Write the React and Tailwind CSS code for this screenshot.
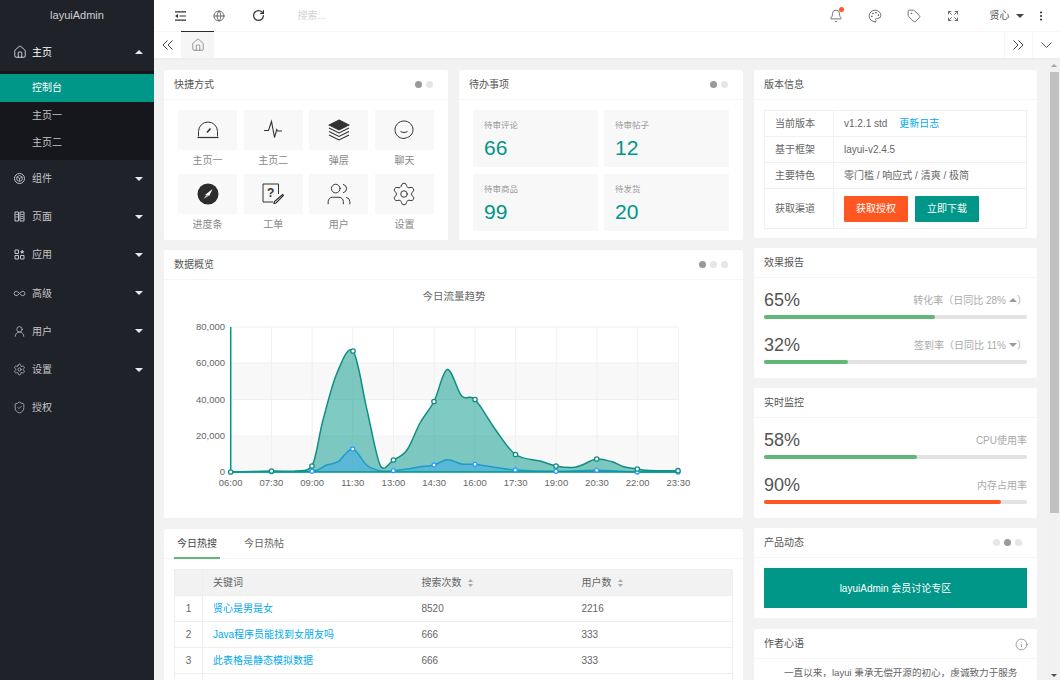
import React from 'react';
import {
  House, Infinity as InfinityIcon, UserRound, Settings, ShieldCheck, Globe, RotateCw,
  Bell, Palette, Tag, Expand, EllipsisVertical, Info, Users,
} from 'lucide-react';

// layui's cube and template glyphs are not in lucide, drawn to the same box
const CubeGlyph = ({ size }) => (
  <svg width={size} height={size} viewBox="0 0 13 13" fill="none" stroke="currentColor" strokeWidth="1">
    <circle cx="6.5" cy="6.5" r="5" />
    <path d="M6.500 3.500l2.700 1.500v3L6.500 9.500 3.800 8V5zM3.800 5l2.700 1.500L9.200 5M6.500 6.500v3" strokeWidth="0.8" />
  </svg>
);
const TemplateGlyph = ({ size }) => (
  <svg width={size} height={size} viewBox="0 0 13 13" fill="none" stroke="currentColor" strokeWidth="1">
    <path d="M2 2h3.500v9H2zM7 2h4v9H7z" />
    <path d="M7.500 4.500h3M7.500 6.500h3M7.500 8.500h3M2.500 4.500h2.500M2.500 7h2.500" strokeWidth="0.8" />
  </svg>
);
const AppsGlyph = ({ size }) => (
  <svg width={size} height={size} viewBox="0 0 13 13" fill="none" stroke="currentColor" strokeWidth="1">
    <path d="M2 2h3.500v3.500H2zM2 7.500h3.500V11H2zM7.500 7.500H11V11H7.500z" />
    <path d="M9.200 1.500l.7 1.500 1.500.2-1.100 1 .3 1.500-1.400-.7-1.400.7.300-1.500-1.100-1 1.500-.2z" fill="currentColor" stroke="none" />
  </svg>
);

const navItems = [
  { label: '组件', icon: CubeGlyph },
  { label: '页面', icon: TemplateGlyph },
  { label: '应用', icon: AppsGlyph },
  { label: '高级', icon: InfinityIcon },
  { label: '用户', icon: UserRound },
  { label: '设置', icon: Settings },
  { label: '授权', icon: ShieldCheck, noCaret: true },
];

const CaretUp = () => <span className="w-0 h-0 border-x-4 border-x-transparent border-b-4 border-b-white/90" />;
const CaretDown = ({ className = 'border-t-white/90' }) => <span className={`w-0 h-0 border-x-4 border-x-transparent border-t-4 ${className}`} />;

const Sidebar = () => (
  <aside className="w-[154px] shrink-0 bg-[#20222a] text-[#c4c4c6] text-[10px]">
    <div className="h-[33px] pb-[2px] flex items-center justify-center text-[11px] text-[#d0d0d2]">layuiAdmin</div>
    <div className="h-[38px] flex items-center pl-[13px] pr-[11px] text-white">
      <House size={14} strokeWidth={1.3} />
      <span className="ml-[5px] flex-1">主页</span>
      <CaretUp />
    </div>
    <div className="bg-[#16171d] py-[3px]">
      <div className="h-[27.5px] flex items-center pl-[32px] bg-[#009688] text-white">控制台</div>
      <div className="h-[27.5px] flex items-center pl-[32px]">主页一</div>
      <div className="h-[27.5px] flex items-center pl-[32px]">主页二</div>
    </div>
    {navItems.map(({ label, icon: Icon, noCaret }) => (
      <div key={label} className="h-[38.2px] flex items-center pl-[13px] pr-[11px]">
        <Icon size={13} strokeWidth={1.4} />
        <span className="ml-[6px] flex-1">{label}</span>
        {!noCaret && <CaretDown />}
      </div>
    ))}
  </aside>
);

const TopBar = () => (
  <div className="h-[32px] bg-white border-b border-[#f6f6f6] flex items-center pl-[6.500px] pr-[9px] text-[#333] text-[10px]">
    <div className="w-[39px] flex justify-center">
      <svg width="11" height="10" viewBox="0 0 11 10" fill="none" stroke="#333" strokeWidth="1.2">
        <path d="M0 .8h11M4.500 5h6.500M0 9.200h11" />
        <path d="M3 3v4L0 5z" fill="#333" stroke="none" />
      </svg>
    </div>
    <div className="w-[39px] flex justify-center"><Globe size={12} strokeWidth={1.7} className="text-[#555]" /></div>
    <div className="w-[39px] flex justify-center"><RotateCw size={13} strokeWidth={2.3} /></div>
    <span className="ml-[20px] text-[#d2d2d2] flex-1">搜索...</span>
    <div className="w-[39px] flex justify-center relative">
      <Bell size={14} strokeWidth={1.4} className="text-[#555]" />
      <span className="absolute left-[23px] -top-[2px] w-[5px] h-[5px] rounded-full bg-[#ff5722]" />
    </div>
    <div className="w-[39px] flex justify-center"><Palette size={14} strokeWidth={1.4} className="text-[#555]" /></div>
    <div className="w-[39px] flex justify-center"><Tag size={14} strokeWidth={1.4} className="text-[#555]" /></div>
    <div className="w-[39px] flex justify-center"><Expand size={12} strokeWidth={1.6} className="text-[#555]" /></div>
    <div className="w-[59px] flex items-center justify-center gap-[6px] text-[#555] pl-[10px]">
      <span>贤心</span>
      <CaretDown className="border-t-[#444]" />
    </div>
    <div className="w-[20px] flex justify-center pr-[1px]"><EllipsisVertical size={12} strokeWidth={2.2} /></div>
  </div>
);

const Chevrons = ({ flip }) => (
  <svg width="11" height="10" viewBox="0 0 11 10" fill="none" stroke="#444" strokeWidth="1" className={flip ? 'rotate-180' : ''}>
    <path d="M5.500 .5L1 5l4.500 4.500M10.500 .5L6 5l4.500 4.500" />
  </svg>
);

const TabBar = () => (
  <div className="h-[28px] bg-white flex items-stretch border-b-2 border-[#ededed] text-[#555]">
    <div className="w-[27px] flex items-center justify-center"><Chevrons /></div>
    <div className="w-[33px] -mt-[1px] border-t border-[#292b34] bg-[#f6f6f6] flex items-center justify-center">
      <House size={14} strokeWidth={1} />
    </div>
    <div className="flex-1" />
    <div className="w-[28px] border-l border-[#f6f6f6] flex items-center justify-center"><Chevrons flip /></div>
    <div className="w-[28px] border-l border-[#f6f6f6] flex items-center justify-center">
      <svg width="11" height="6" viewBox="0 0 11 6" fill="none" stroke="#555" strokeWidth="1"><path d="M.5 .5l5 5 5-5" /></svg>
    </div>
  </div>
);

const Dots = ({ count, active = 0 }) => (
  <div className="flex gap-[4px] mr-[5px]">
    {Array.from({ length: count }).map((_, i) => (
      <span key={i} className={i === active ? 'w-[7px] h-[7px] rounded-full bg-[#999]' : 'w-[7px] h-[7px] rounded-full bg-[#e6e6e6]'} />
    ))}
  </div>
);

const Card = ({ title, right, className = '', children }) => (
  <section className={`bg-white rounded-[2px] ${className}`}>
    <div className="h-[30px] px-[10px] flex items-center justify-between border-b border-[#f6f6f6] text-[10px] text-[#555]">
      <span>{title}</span>
      {right}
    </div>
    {children}
  </section>
);

// shortcut icons, all on a 22 box
const GaugeIcon = () => (
  <svg width="22" height="22" viewBox="0 0 22 22" fill="none" stroke="#333" strokeWidth="1">
    <path d="M1.500 17.500V12.500a9.500 9.500 0 0 1 19 0v5" />
    <path d="M.5 18.500h21" strokeWidth="1.200" />
    <path d="M10 13.500l3.500-4" strokeWidth="1.600" />
  </svg>
);
const PulseIcon = () => (
  <svg width="20" height="22" viewBox="0 0 20 22" fill="none" stroke="#333" strokeWidth="1.100">
    <path d="M1 11.500h4.500L8.500 2.500l3 16 2.200-8 1 1.500H19" />
  </svg>
);
const LayersIcon = () => (
  <svg width="22" height="22" viewBox="0 0 22 22" fill="none" stroke="#333" strokeWidth="1.100">
    <path d="M11 1l10 5-10 5L1 6z" fill="#333" />
    <path d="M1 9l10 5 10-5M1 12.500l10 5 10-5M1 16l10 5 10-5" />
  </svg>
);
const ChatIcon = () => (
  <svg width="20" height="22" viewBox="0 0 20 22" fill="none" stroke="#333" strokeWidth="1">
    <path d="M10 19.500c-5 0-9-3.800-9-8.700s4-8.800 9-8.800 9 3.900 9 8.800c0 4.200-3 7-6.700 8z" />
    <path d="M6.500 12.500c2 1.300 5 1.300 7 0" />
  </svg>
);
const CompassIcon = () => (
  <svg width="22" height="22" viewBox="0 0 22 22">
    <circle cx="11" cy="11" r="10.500" fill="#2c2c2c" />
    <path d="M15.500 6l-3 6.500L8 12z" fill="#fff" />
    <path d="M6.500 16l3-4.500 3 1z" fill="#bbb" />
  </svg>
);
const FormIcon = () => (
  <svg width="22" height="22" viewBox="0 0 22 22" fill="none" stroke="#333" strokeWidth="1">
    <path d="M1 1h15.500v10M11 19H1V1" />
    <path d="M20.500 11.500l1 1L14 20l-2 .5.500-2z" strokeWidth="1.200" />
    <text x="5" y="14" fontSize="12" fontWeight="700" fill="#333" stroke="none" fontFamily="Liberation Sans">?</text>
  </svg>
);

const shortcuts = [
  { label: '主页一', icon: <GaugeIcon /> },
  { label: '主页二', icon: <PulseIcon /> },
  { label: '弹层', icon: <LayersIcon /> },
  { label: '聊天', icon: <ChatIcon /> },
  { label: '进度条', icon: <CompassIcon /> },
  { label: '工单', icon: <FormIcon /> },
  { label: '用户', icon: <Users size={26} strokeWidth={0.9} className="text-[#333]" /> },
  { label: '设置', icon: <Settings size={26} strokeWidth={0.9} className="text-[#333]" /> },
];

const todos = [
  { label: '待审评论', value: 66 },
  { label: '待审帖子', value: 12 },
  { label: '待审商品', value: 99 },
  { label: '待发货', value: 20 },
];

// page coordinates read off the picture, viewBox below starts at the card's corner
const tealPts = [[230.7, 472], [271.5, 471], [296, 471], [312, 466], [323, 420], [337, 373], [353, 351], [367, 410], [380.7, 466.5], [393.5, 460], [407, 450], [420, 423], [434, 401.5], [447.3, 369.5], [461.7, 396], [475, 399.5], [495, 429], [515.5, 454.5], [540, 461], [556, 466], [573, 467.5], [582, 465], [596.7, 459], [613, 462], [623, 466.5], [637.3, 469], [650, 470.5], [678, 470.7]];
const bluePts = [[230.7, 472], [271.5, 471.7], [312, 471.3], [326.7, 465], [338, 461.7], [352.7, 449], [366.7, 465], [380.7, 471], [393.3, 470.7], [407, 469], [420, 466.7], [434, 465], [447.3, 459.7], [461.7, 464], [475, 464.3], [493, 467], [515.3, 470], [556, 471.3], [596.7, 470.3], [637.3, 472], [678, 472]];
const tealDots = [0, 1, 3, 6, 9, 12, 15, 17, 19, 22, 25, 27].map(i => tealPts[i]);
const blueDots = [1, 2, 5, 8, 11, 14, 16, 17, 18, 19, 20].map(i => bluePts[i]);

const smooth = (pts) => {
  let d = `M${pts[0][0]} ${pts[0][1]}`;
  for (let i = 0; i < pts.length - 1; i++) {
    const p0 = pts[i - 1] || pts[i];
    const p1 = pts[i];
    const p2 = pts[i + 1];
    const p3 = pts[i + 2] || p2;
    const c1 = [p1[0] + (p2[0] - p0[0]) / 6, Math.min(472, p1[1] + (p2[1] - p0[1]) / 6)];
    const c2 = [p2[0] - (p3[0] - p1[0]) / 6, Math.min(472, p2[1] - (p3[1] - p1[1]) / 6)];
    d += `C${c1[0].toFixed(1)} ${c1[1].toFixed(1)} ${c2[0].toFixed(1)} ${c2[1].toFixed(1)} ${p2[0]} ${p2[1]}`;
  }
  return d;
};

const xLabels = ['06:00', '07:30', '09:00', '11:30', '13:00', '14:30', '16:00', '17:30', '19:00', '20:30', '22:00', '23:30'];
const yLabels = [['80,000', 327], ['60,000', 363], ['40,000', 399.5], ['20,000', 436], ['0', 472]];

const TrafficChart = () => {
  const xs = xLabels.map((_, i) => 230.7 + i * 40.7);
  const teal = smooth(tealPts);
  const blue = smooth(bluePts);
  return (
    <svg width="579" height="238" viewBox="164 280 579 238" className="block" fontFamily="'Liberation Sans','Noto Sans CJK SC',sans-serif">
      <text x="454" y="300" textAnchor="middle" fontSize="10.5" fill="#666">今日流量趋势</text>
      <rect x="231" y="363" width="447" height="36.5" fill="#f8f8f8" />
      <rect x="231" y="436" width="447" height="36" fill="#f8f8f8" />
      {yLabels.map(([, y]) => <path key={y} d={`M231 ${y}H678`} stroke="#f0f0f0" />)}
      {xs.map(x => <path key={x} d={`M${x} 327V472`} stroke="#f0f0f0" />)}
      <path d={`${teal}V472H230.7Z`} fill="#009688" fillOpacity="0.5" />
      <path d={`${blue}V472H230.7Z`} fill="#1e9fff" fillOpacity="0.35" />
      <path d={teal} fill="none" stroke="#0f8f80" strokeWidth="1.5" />
      <path d={blue} fill="none" stroke="#1b9ccb" strokeWidth="1.5" />
      <path d="M230.7 327V472H678" fill="none" stroke="#009688" strokeWidth="1.5" />
      {blueDots.map(([x, y]) => <circle key={x} cx={x} cy={y} r="2" fill="#fff" stroke="#2e9bff" strokeWidth="1.3" />)}
      {tealDots.map(([x, y]) => <circle key={x} cx={x} cy={y} r="2.2" fill="#fff" stroke="#0f8f80" strokeWidth="1.3" />)}
      {yLabels.map(([t, y]) => <text key={t} x="225" y={y + 3} textAnchor="end" fontSize="9.5" fill="#666">{t}</text>)}
      {xLabels.map((t, i) => <text key={t} x={xs[i]} y="486" textAnchor="middle" fontSize="9.5" fill="#666">{t}</text>)}
    </svg>
  );
};

const SortIcon = () => (
  <svg width="5" height="8" viewBox="0 0 5 8" className="inline-block ml-[6px] align-[-1px]" fill="#aaa">
    <path d="M2.500 0L5 3H0zM2.500 8L0 5h5z" />
  </svg>
);

const rows = [
  { title: '贤心是男是女', a: 8520, b: 2216 },
  { title: 'Java程序员能找到女朋友吗', a: 666, b: 333 },
  { title: '此表格是静态模拟数据', a: 666, b: 333 },
];

const HotTable = () => (
  <section className="bg-white rounded-[2px] mt-[1px]">
    <div className="h-[30px] flex border-b border-[#f6f6f6] text-[10px] pl-[10px]">
      <div className="w-[46px] flex items-center justify-center text-[#444] border-b-2 border-[#5fb878] h-[30px]">今日热搜</div>
      <div className="ml-[24px] w-[40px] flex items-center text-[#666]">今日热帖</div>
    </div>
    <div className="pl-[10px] pt-[10px] pb-[10px]">
      <table className="w-[559px] table-fixed border-collapse text-[10px] text-[#666]">
        <colgroup>
          <col className="w-[28px]" />
          <col className="w-[209px]" />
          <col className="w-[160px]" />
          <col />
        </colgroup>
        <thead>
          <tr className="bg-[#f2f2f2] h-[26px]">
            <th className="border border-[#eee] font-normal" />
            <th className="border-y border-[#eee] font-normal text-left pl-[10px]">关键词</th>
            <th className="border-y border-[#eee] font-normal text-left pl-[10px]">搜索次数<SortIcon /></th>
            <th className="border-y border-r border-[#eee] font-normal text-left pl-[10px]">用户数<SortIcon /></th>
          </tr>
        </thead>
        <tbody>
          {rows.map((row, i) => (
            <tr key={i} className="h-[26px]">
              <td className="border border-[#eee] text-center">{i + 1}</td>
              <td className="border-y border-[#eee] pl-[10px] text-[#01aaed]">{row.title}</td>
              <td className="border-y border-[#eee] pl-[10px]">{row.a}</td>
              <td className="border-y border-r border-[#eee] pl-[10px]">{row.b}</td>
            </tr>
          ))}
          {/* next row starts just above the fold, its text is out of view */}
          <tr className="h-[26px]">
            <td className="border border-[#eee]" />
            <td className="border-y border-[#eee]" />
            <td className="border-y border-[#eee]" />
            <td className="border-y border-r border-[#eee]" />
          </tr>
        </tbody>
      </table>
    </div>
  </section>
);

const VersionTable = () => (
  <table className="w-[263px] table-fixed border-collapse text-[10px] text-[#666]">
    <colgroup>
      <col className="w-[69px]" />
      <col />
    </colgroup>
    <tbody>
      <tr className="h-[26px]">
        <td className="border border-[#f0f0f0] pl-[10px]">当前版本</td>
        <td className="border border-[#f0f0f0] pl-[10px]">v1.2.1 std<span className="ml-[12px] text-[#01aaed]">更新日志</span></td>
      </tr>
      <tr className="h-[26px]">
        <td className="border border-[#f0f0f0] pl-[10px]">基于框架</td>
        <td className="border border-[#f0f0f0] pl-[10px]">layui-v2.4.5</td>
      </tr>
      <tr className="h-[26px]">
        <td className="border border-[#f0f0f0] pl-[10px]">主要特色</td>
        <td className="border border-[#f0f0f0] pl-[10px]">零门槛 / 响应式 / 清爽 / 极简</td>
      </tr>
      <tr className="h-[40px]">
        <td className="border border-[#f0f0f0] pl-[10px]">获取渠道</td>
        <td className="border border-[#f0f0f0] pl-[10px]">
          <div className="flex gap-[7px]">
            <button className="w-[64px] h-[26px] rounded-[1px] bg-[#ff5722] text-white">获取授权</button>
            <button className="w-[64px] h-[26px] rounded-[1px] bg-[#009688] text-white">立即下载</button>
          </div>
        </td>
      </tr>
    </tbody>
  </table>
);

const Meter = ({ value, label, trend, color = 'bg-[#5fb878]' }) => (
  <div className="mb-[14px] last:mb-0">
    <div className="h-[24px] flex items-center justify-between text-[#666]">
      <span className="text-[18px] text-[#555]">{value}%</span>
      <span className="text-[10px] text-[#aaa] flex items-center">
        {label}
        {trend && (
          <>
            （日同比 {trend.n}%
            {trend.up
              ? <span className="ml-[3px] w-0 h-0 border-x-4 border-x-transparent border-b-4 border-b-[#999]" />
              : <span className="ml-[3px] w-0 h-0 border-x-4 border-x-transparent border-t-4 border-t-[#999]" />}
            ）
          </>
        )}
      </span>
    </div>
    <div className="mt-[3px] h-[4px] rounded-full bg-[#e2e2e2]">
      <div className={`h-full rounded-full ${color}`} style={{ width: `${value}%` }} />
    </div>
  </div>
);

const Scrollbar = () => (
  <div className="w-[12px] shrink-0 bg-[#f1f1f1] flex flex-col items-center pt-[4px]">
    <span className="w-0 h-0 border-x-[3px] border-x-transparent border-b-[3px] border-b-[#a3a3a3]" />
    <div className="w-[9px] h-[441px] mt-[5px] bg-[#c1c1c1]" />
    <div className="flex-1" />
    <span className="mb-[3px] w-0 h-0 border-x-[3px] border-x-transparent border-t-[3px] border-t-[#505050]" />
  </div>
);

const App = () => (
  <div className="h-[680px] w-[1060px] overflow-hidden flex font-['Liberation_Sans','Noto_Sans_CJK_SC',sans-serif] bg-[#f2f2f2]">
    <Sidebar />
    <div className="flex-1 flex flex-col min-w-0">
      <TopBar />
      <TabBar />
      <div className="flex-1 flex min-h-0">
        <main className="flex-1 min-w-0 overflow-hidden pl-[10px] pt-[10px] grid grid-cols-[579px_283px] gap-x-[11px] items-start">
          <div className="flex flex-col gap-[10px]">
            <div className="grid grid-cols-[284px_284px] gap-x-[11px]">
              <Card title="快捷方式" right={<Dots count={2} />} className="h-[170px]">
                <div className="px-[14px] pt-[10px] grid grid-cols-4 gap-x-[6.5px]">
                  {shortcuts.map(s => (
                    <div key={s.label} className="h-[64px] text-center text-[10px] text-[#888]">
                      <div className="h-[40px] bg-[#f8f8f8] flex items-center justify-center">{s.icon}</div>
                      <div className="mt-[3px] leading-[15px]">{s.label}</div>
                    </div>
                  ))}
                </div>
              </Card>
              <Card title="待办事项" right={<Dots count={2} />} className="h-[170px]">
                <div className="px-[14px] pt-[10px] grid grid-cols-2 gap-x-[6px] gap-y-[7px]">
                  {todos.map(t => (
                    <div key={t.label} className="h-[57px] bg-[#f8f8f8] pl-[11px] pt-[9px]">
                      <div className="text-[8.5px] leading-[12px] text-[#999]">{t.label}</div>
                      <div className="mt-[5px] text-[21px] leading-[24px] text-[#009688]">{t.value}</div>
                    </div>
                  ))}
                </div>
              </Card>
            </div>
            <Card title="数据概览" right={<Dots count={3} />} className="h-[268px]">
              <TrafficChart />
            </Card>
            <HotTable />
          </div>
          <div className="flex flex-col gap-[10px]">
            <Card title="版本信息" className="h-[168px]">
              <div className="px-[10px] pt-[10px]"><VersionTable /></div>
            </Card>
            <Card title="效果报告" className="h-[130px]">
              <div className="px-[10px] pt-[10px]">
                <Meter value={65} label="转化率" trend={{ n: 28, up: true }} />
                <Meter value={32} label="签到率" trend={{ n: 11, up: false }} />
              </div>
            </Card>
            <Card title="实时监控" className="h-[130px]">
              <div className="px-[10px] pt-[10px]">
                <Meter value={58} label="CPU使用率" />
                <Meter value={90} label="内存占用率" color="bg-[#ff5722]" />
              </div>
            </Card>
            <Card title="产品动态" right={<Dots count={3} active={1} />} className="h-[90px]">
              <div className="px-[10px] pt-[10px]">
                <div className="h-[40px] bg-[#009688] text-white text-[10px] flex items-center justify-center">layuiAdmin 会员讨论专区</div>
              </div>
            </Card>
            <section className="bg-white rounded-[2px] mt-[1px]">
              <div className="h-[30px] px-[10px] flex items-center justify-between border-b border-[#f6f6f6] text-[10px] text-[#555]">
                <span>作者心语</span>
                <Info size={13} strokeWidth={1} className="text-[#555] mr-[-1px] mt-[2px]" />
              </div>
              <p className="pl-[30px] pr-[10px] pt-[5px] text-[9.6px] leading-[18px] text-[#666] whitespace-nowrap">
                一直以来，layui 秉承无偿开源的初心，虔诚致力于服务
              </p>
            </section>
          </div>
        </main>
        <Scrollbar />
      </div>
    </div>
  </div>
);

export default App;
